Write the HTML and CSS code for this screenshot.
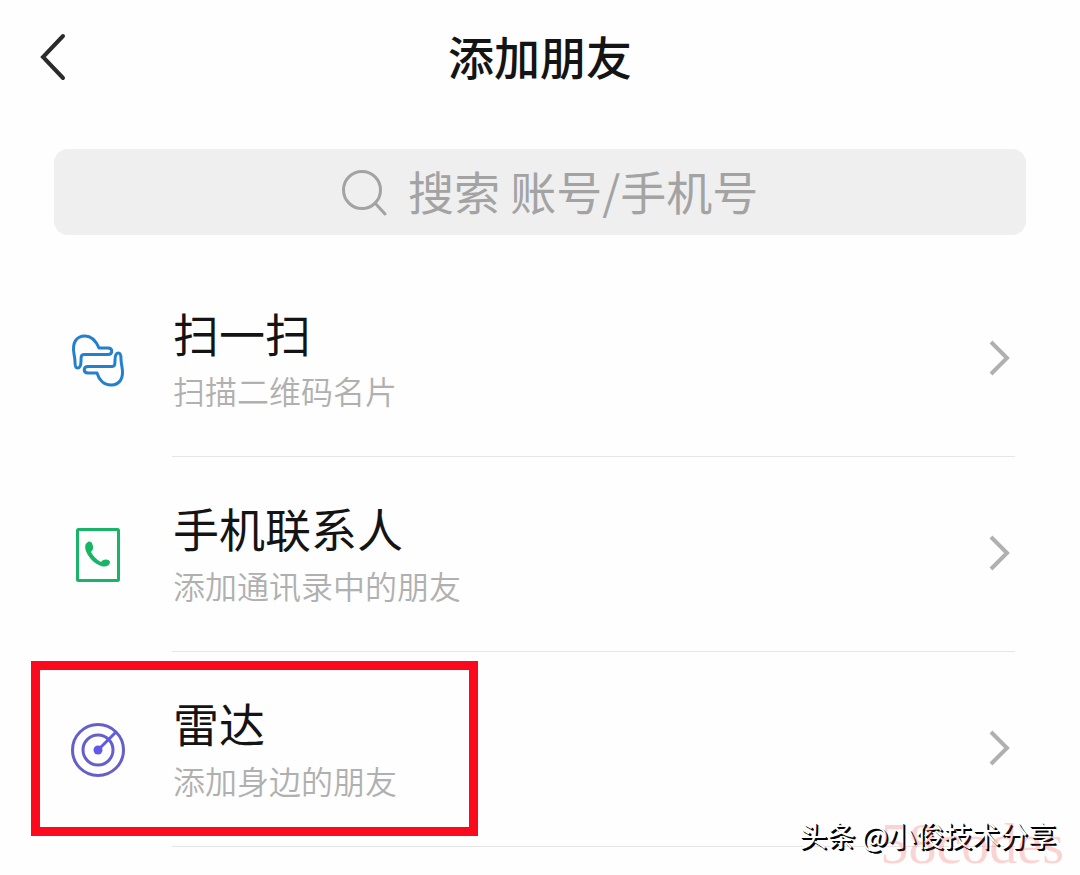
FILE: index.html
```html
<!DOCTYPE html>
<html lang="zh-CN">
<head>
  <meta charset="UTF-8">
  <meta name="viewport" content="width=device-width, initial-scale=1.0">
  <title>添加朋友</title>
  <link rel="stylesheet" href="styles.css">
</head>
<body>
  <header class="top-bar">
    <button class="back-button" type="button" aria-label="返回">
      <svg width="30" height="50" viewBox="0 0 30 50" fill="none" stroke="#2b2b2b" stroke-width="4" stroke-linecap="round">
        <path d="M25 4L5 25L25 46"/>
      </svg>
    </button>
    <h1>添加朋友</h1>
  </header>

  <main>
    <label class="search-bar">
      <svg width="48" height="48" viewBox="0 0 48 48" fill="none" stroke="#a3a3a3" stroke-width="3" stroke-linecap="round">
        <circle cx="22" cy="22" r="18.5"/>
        <path d="M35 35L45 46"/>
      </svg>
      <input class="search-input" type="text" placeholder="搜索 账号/手机号" aria-label="搜索">
    </label>

    <ul class="menu">
      <li class="menu-item">
        <a href="#scan">
          <svg class="menu-icon" width="56" height="56" viewBox="0 0 56 56" fill="none" stroke="#2480cc" stroke-width="3" stroke-linejoin="round">
            <path d="M4 22C2 11 6 4 15 4C22 4 26 9 29 16H38C43 16 43 22.500 38 22.500H14C11 22.500 11 25 11 29C11 33 10 36 7.500 36C5 36 5 33 5 30C5 27 4.500 25 4 22Z"/>
            <path d="M52 35C54 46 50 53 41 53C34 53 29 48 27 41H18C13 41 13 34.500 18 34.500H42C45 34.500 45 32 45 28C45 24 46 21 48.500 21C51 21 51 24 51 27C51 30 51.500 32 52 35Z"/>
          </svg>
          <div class="menu-content">
            <div class="menu-text">
              <h2>扫一扫</h2>
              <p>扫描二维码名片</p>
            </div>
            <svg class="arrow" width="24" height="40" viewBox="0 0 24 40">
              <path d="M4 4L20 20L4 36"/>
            </svg>
          </div>
        </a>
      </li>

      <li class="menu-item">
        <a href="#contacts">
          <svg class="menu-icon" width="56" height="56" viewBox="0 0 56 56">
            <rect x="7.500" y="2.500" width="41" height="51" rx="1" fill="none" stroke="#18b566" stroke-width="3"/>
            <path d="M18 15C15 16.500 14.500 20 16 24C19 32 26 38 33 39.500C36.500 40 39.500 38.500 40 35.500C40.200 33.500 38 32.500 36 32.500C33.500 32.500 32 33.500 31 35C27 33 23 29 21 25C23.500 22.500 23.500 20.500 22.500 17.500C21.800 15 20 14 18 15Z" fill="#18b566"/>
          </svg>
          <div class="menu-content">
            <div class="menu-text">
              <h2>手机联系人</h2>
              <p>添加通讯录中的朋友</p>
            </div>
            <svg class="arrow" width="24" height="40" viewBox="0 0 24 40">
              <path d="M4 4L20 20L4 36"/>
            </svg>
          </div>
        </a>
      </li>

      <li class="menu-item highlighted">
        <a href="#radar">
          <svg class="menu-icon" width="56" height="56" viewBox="0 0 56 56" fill="none" stroke="#6460c8" stroke-width="3">
            <circle cx="28" cy="28" r="25.500"/>
            <circle cx="28" cy="28" r="15"/>
            <path d="M28 28L46 10" stroke="#5f58e8"/>
            <circle cx="28" cy="28" r="4.500" fill="#5f58e8" stroke="none"/>
          </svg>
          <div class="menu-content">
            <div class="menu-text">
              <h2>雷达</h2>
              <p>添加身边的朋友</p>
            </div>
            <svg class="arrow" width="24" height="40" viewBox="0 0 24 40">
              <path d="M4 4L20 20L4 36"/>
            </svg>
          </div>
        </a>
      </li>
    </ul>
  </main>

  <div class="author-mark">头条 @小俊技术分享</div>
  <div class="site-mark">58codes</div>
</body>
</html>
```

FILE: styles.css
```css
*,
*::after {
  box-sizing: border-box;
}

body {
  position: relative;
  margin: 0;
  min-height: 100vh;
  background-color: #fefefe;
  color: #141414;
  font-family: "Noto Sans CJK SC", sans-serif;
}

.top-bar {
  display: grid;
  grid-template-columns: 38px 1fr 38px;
  align-items: center;
  height: 114px;
  padding: 0 38px;
}

.back-button {
  display: flex;
  padding: 0;
  border: none;
  background: none;
  cursor: pointer;
}

h1 {
  margin: 0;
  padding-bottom: 4px;
  font-size: 46px;
  line-height: 60px;
  font-weight: 500;
  text-align: center;
}

.search-bar {
  display: flex;
  align-items: center;
  justify-content: center;
  gap: 20px;
  height: 86px;
  margin: 35px 54px 27px;
  padding-left: 20px; /* balances the space after the placeholder */
  border-radius: 14px;
  background-color: #efefef;
}

.search-input {
  width: 352px;
  padding: 0 0 4px;
  border: none;
  outline: none;
  background: none;
  color: #141414;
  font-family: inherit;
  font-size: 46px;
  line-height: 60px;
}

.search-input::placeholder {
  color: #a3a3a3;
}

.menu {
  margin: 0;
  padding: 0;
  list-style: none;
}

.menu-item {
  position: relative;
}

.menu-item a {
  display: flex;
  align-items: center;
  gap: 46px;
  padding: 0 65px 0 70px;
  color: inherit;
  text-decoration: none;
}

.menu-icon {
  flex: none;
}

.menu-content {
  display: flex;
  flex: 1;
  align-items: center;
  justify-content: space-between;
  padding: 40px 4px 42px 1px;
  border-bottom: 1px solid #e6e6e6;
}

.menu-text h2 {
  margin: 0 0 4px;
  font-size: 46px;
  line-height: 60px;
  font-weight: 400;
}

.menu-text p {
  margin: 0;
  color: #b0b0b0;
  font-size: 32px;
  line-height: 48px;
  font-weight: 350;
}

.arrow {
  fill: none;
  stroke: #b0b0b0;
  stroke-width: 4;
}

/* Red frame over the radar row */
.highlighted::after {
  content: "";
  position: absolute;
  top: 9px;
  left: 31px;
  width: 447px;
  height: 175px;
  border: 9px solid #fb0a1e;
  pointer-events: none;
}

.author-mark,
.site-mark {
  position: absolute;
  pointer-events: none;
}

.author-mark {
  right: 24px;
  bottom: 20px;
  color: #fff;
  font-size: 28px;
  line-height: 40px;
  text-shadow: 1px 1px 0 #000, 2px 2px 0 #000;
}

.site-mark {
  right: 16px;
  bottom: 0;
  color: rgba(240, 60, 60, 0.22);
  font-family: "Liberation Serif", serif;
  font-size: 56px;
  line-height: 62px;
}
```
